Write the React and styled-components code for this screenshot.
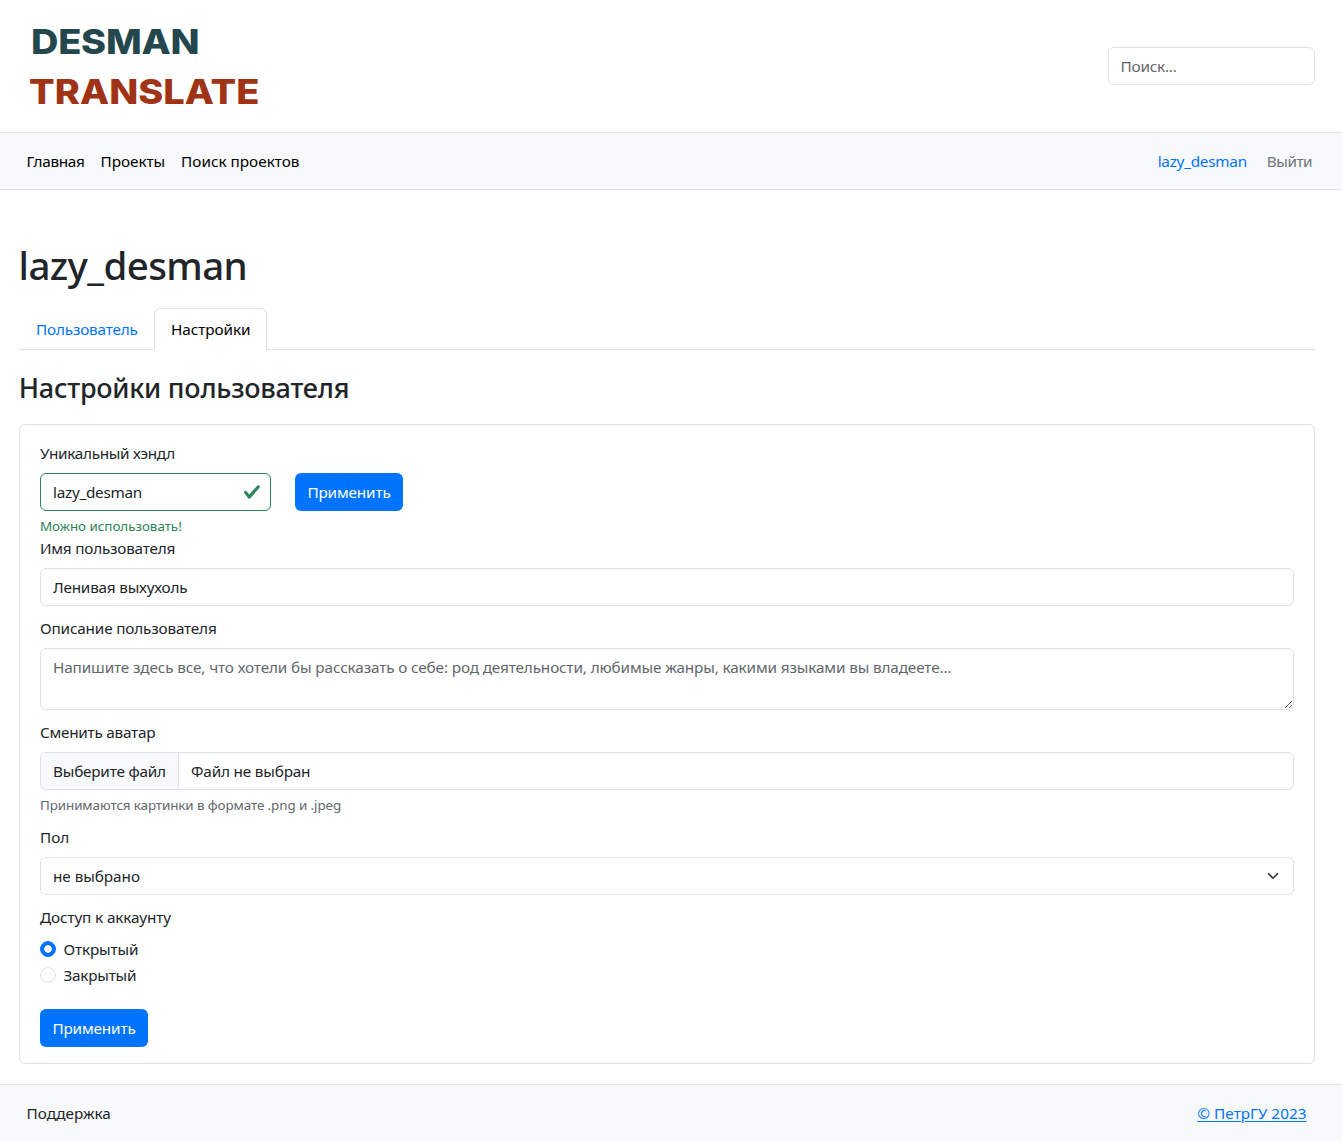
import React from "react";
import styled, { createGlobalStyle, css } from "styled-components";

const sans = `"Noto Sans", "Open Sans", sans-serif`;
const c = {
  text: "#212529",
  muted: "#6c757d",
  link: "#0074ff",
  border: "#dee2e6",
  soft: "#f8f9fb",
  green: "#2b8558",
};

const Global = createGlobalStyle`
  *, *::before, *::after { box-sizing: border-box; }
  body {
    margin: 0;
    background: #fff;
    color: ${c.text};
    font: 400 15.3px/24px ${sans};
  }
  input, select, textarea, button { font: inherit; color: inherit; }
`;

const T = styled.span`
  letter-spacing: ${(p) => p.$ls || 0}px;
  white-space: nowrap;
`;

const Page = styled.div`
  display: flex;
  flex-direction: column;
  min-height: 1141px;
`;

const Header = styled.header`
  display: flex;
  align-items: center;
  justify-content: space-between;
  height: 132px;
  padding: 0 27px 0 30px;
`;

const Logo = styled.div`
  display: flex;
  flex-direction: column;
  padding-top: 2px;
  font: 800 34.5px/50px Inter, sans-serif;
  transform: scaleX(1.1);
  transform-origin: left;
`;

const LogoLine = styled.span`
  color: ${(p) => p.$color};
  text-indent: ${(p) => p.$indent}px;
  letter-spacing: ${(p) => p.$ls || 0}px;
`;

const controlBox = css`
  display: block;
  width: 100%;
  height: 38px;
  padding: 6px 12px;
  border: 1px solid ${c.border};
  border-radius: 6px;
  background: #fff;
  letter-spacing: ${(p) => p.$ls || 0}px;
  outline: none;
  &::placeholder { color: #62676c; opacity: 1; }
`;

const Input = styled.input`${controlBox}`;
const SearchInput = styled(Input)`
  width: 207px;
  padding-left: 11.5px;
`;
const TextArea = styled.textarea`
  ${controlBox}
  height: 62px;
  resize: vertical;
`;

const Bar = styled.div`
  display: flex;
  align-items: center;
  justify-content: space-between;
  height: ${(p) => (p.$footer ? 57 : 58)}px;
  padding: 0 ${(p) => (p.$footer ? 35.5 : 30)}px 0 26.5px;
  background: ${c.soft};
  border: solid ${c.border};
  border-width: 1px 0 ${(p) => (p.$footer ? 0 : 1)}px;
`;

const Links = styled.nav`
  display: flex;
  gap: ${(p) => p.$gap}px;
`;

const NavLink = styled.a`
  color: ${(p) => p.$color || "#000"};
  letter-spacing: ${(p) => p.$ls || 0}px;
  text-decoration: ${(p) => (p.$underline ? "underline" : "none")};
  text-underline-offset: 2px;
  white-space: nowrap;
`;

const Main = styled.main`
  padding: 51px 27px 20px 19px;
`;

const H1 = styled.h1`
  margin: 0 0 19px;
  font-size: 38.5px;
  font-weight: 500;
  line-height: 48px;
  letter-spacing: -0.6px;
  text-indent: -0.4px;
`;

const H2 = styled.h2`
  margin: 21px 0 19px;
  font-size: 27px;
  font-weight: 500;
  line-height: 34px;
  letter-spacing: -0.23px;
  text-indent: -0.2px;
`;

const Tabs = styled.div`
  display: flex;
  height: 42px;
  border-bottom: 1px solid ${c.border};
`;

const Tab = styled.a`
  width: ${(p) => p.$w}px;
  height: 42px;
  padding: 8px 0 8px 16px;
  border: 1px solid transparent;
  border-radius: 6px 6px 0 0;
  color: ${c.link};
  letter-spacing: ${(p) => p.$ls}px;
  white-space: nowrap;
  ${(p) =>
    p.$active &&
    css`
      color: #000;
      background: #fff;
      border-color: ${c.border} ${c.border} #fff;
    `}
`;

const Card = styled.form`
  height: 640px;
  padding: 16px 20px;
  border: 1px solid ${c.border};
  border-radius: 6px;
`;

const Field = styled.div`
  margin-bottom: ${(p) => p.$gap ?? 10}px;
`;

const Label = styled.label`
  display: block;
  margin-bottom: 8px;
  letter-spacing: ${(p) => p.$ls || 0}px;
`;

const Row = styled.div`
  display: flex;
  gap: 24px;
`;

const ValidBox = styled.div`
  display: flex;
  align-items: center;
  width: 231px;
  height: 38px;
  padding: 0 9px 0 12px;
  border: 1px solid ${c.green};
  border-radius: 6px;
`;

const BareInput = styled.input`
  flex: 1;
  min-width: 0;
  padding: 0;
  border: 0;
  outline: none;
  background: none;
  letter-spacing: -0.28px;
`;

const Button = styled.button`
  width: 108px;
  height: 38px;
  padding: 0;
  border: 0;
  border-radius: 6px;
  background: ${c.link};
  color: #fff;
  letter-spacing: -0.15px;
`;

const Hint = styled.div`
  margin-top: 5px;
  font-size: 13.4px;
  line-height: 20px;
  color: ${(p) => p.$color};
  letter-spacing: ${(p) => p.$ls || 0}px;
`;

const FileBox = styled.div`
  display: flex;
  height: 38px;
  border: 1px solid ${c.border};
  border-radius: 6px;
  overflow: hidden;
`;

const FilePart = styled.span`
  padding: 6px 12px;
  letter-spacing: ${(p) => p.$ls}px;
  white-space: nowrap;
  ${(p) =>
    p.$button &&
    css`
      width: 138px;
      background: ${c.soft};
      border-right: 1px solid ${c.border};
    `}
`;

const SelectBox = styled.div`
  display: flex;
  align-items: center;
  justify-content: space-between;
  height: 38px;
  padding: 0 12px;
  border: 1px solid ${c.border};
  border-radius: 6px;
`;

const Option = styled.label`
  display: flex;
  align-items: center;
  gap: 7.5px;
  height: 24px;
  margin-bottom: 2px;
`;

const Radio = styled.input.attrs({ type: "radio" })`
  appearance: none;
  width: 16px;
  height: 16px;
  margin: 0;
  border: 1px solid ${c.border};
  border-radius: 50%;
  background: #fff;
  &:checked {
    border-color: ${c.link};
    background: radial-gradient(circle, #fff 3.4px, ${c.link} 4.2px);
  }
`;

const Submit = styled.div`
  padding-top: 20px;
`;

export default function App() {
  return (
    <Page>
      <Global />
      <Header>
        <Logo>
          <LogoLine $color="#24474d" $indent={0.9} $ls={-0.2}>DESMAN</LogoLine>
          <LogoLine $color="#a03315" $indent={-0.8}>TRANSLATE</LogoLine>
        </Logo>
        <SearchInput placeholder="Поиск..." $ls={-0.21} />
      </Header>
      <Bar>
        <Links $gap={16}>
          <NavLink $ls={-0.3}>Главная</NavLink>
          <NavLink $ls={-0.05}>Проекты</NavLink>
          <NavLink>Поиск проектов</NavLink>
        </Links>
        <Links $gap={20}>
          <NavLink $color={c.link} $ls={-0.26}>lazy_desman</NavLink>
          <NavLink $color={c.muted} $ls={-0.5}>Выйти</NavLink>
        </Links>
      </Bar>
      <Main>
        <H1>lazy_desman</H1>
        <Tabs>
          <Tab $w={135} $ls={-0.18}>Пользователь</Tab>
          <Tab $w={113} $ls={-0.06} $active>Настройки</Tab>
        </Tabs>
        <H2>Настройки пользователя</H2>
        <Card>
          <Field $gap={0}>
            <Label $ls={-0.3}>Уникальный хэндл</Label>
            <Row>
              <ValidBox>
                <BareInput defaultValue="lazy_desman" />
                <svg width="18" height="18" viewBox="0 0 8 8">
                  <path
                    fill={c.green}
                    d="M2.3 6.73.6 4.53c-.4-1.04.46-1.4 1.1-.8l1.1 1.4 3.4-3.8c.6-.63 1.6-.27 1.2.7l-4 4.6c-.43.5-.8.4-1.1.1z"
                  />
                </svg>
              </ValidBox>
              <Button type="button">Применить</Button>
            </Row>
            <Hint $color={c.green} $ls={-0.03}>Можно использовать!</Hint>
          </Field>
          <Field>
            <Label $ls={-0.22}>Имя пользователя</Label>
            <Input defaultValue="Ленивая выхухоль" $ls={-0.21} />
          </Field>
          <Field>
            <Label $ls={-0.17}>Описание пользователя</Label>
            <TextArea
              $ls={-0.13}
              placeholder="Напишите здесь все, что хотели бы рассказать о себе: род деятельности, любимые жанры, какими языками вы владеете..."
            />
          </Field>
          <Field>
            <Label $ls={-0.25}>Сменить аватар</Label>
            <FileBox>
              <FilePart $button $ls={-0.21}>Выберите файл</FilePart>
              <FilePart $ls={-0.18}>Файл не выбран</FilePart>
            </FileBox>
            <Hint $color="#62676c" $ls={-0.09}>
              Принимаются картинки в формате .png и .jpeg
            </Hint>
          </Field>
          <Field>
            <Label>Пол</Label>
            <SelectBox>
              <T $ls={-0.05}>не выбрано</T>
              <svg width="16" height="12" viewBox="0 0 16 16">
                <path
                  d="m2 5 6 6 6-6"
                  fill="none"
                  stroke="#343a40"
                  strokeWidth="2.3"
                  strokeLinecap="round"
                  strokeLinejoin="round"
                />
              </svg>
            </SelectBox>
          </Field>
          <Label $ls={-0.12}>Доступ к аккаунту</Label>
          <Option>
            <Radio name="access" defaultChecked />
            <T $ls={-0.15}>Открытый</T>
          </Option>
          <Option>
            <Radio name="access" />
            <T $ls={-0.24}>Закрытый</T>
          </Option>
          <Submit>
            <Button type="button">Применить</Button>
          </Submit>
        </Card>
      </Main>
      <Bar as="footer" $footer>
        <NavLink $color={c.text}>Поддержка</NavLink>
        <NavLink $color={c.link} $underline $ls={0.03}>© ПетрГУ 2023</NavLink>
      </Bar>
    </Page>
  );
}
